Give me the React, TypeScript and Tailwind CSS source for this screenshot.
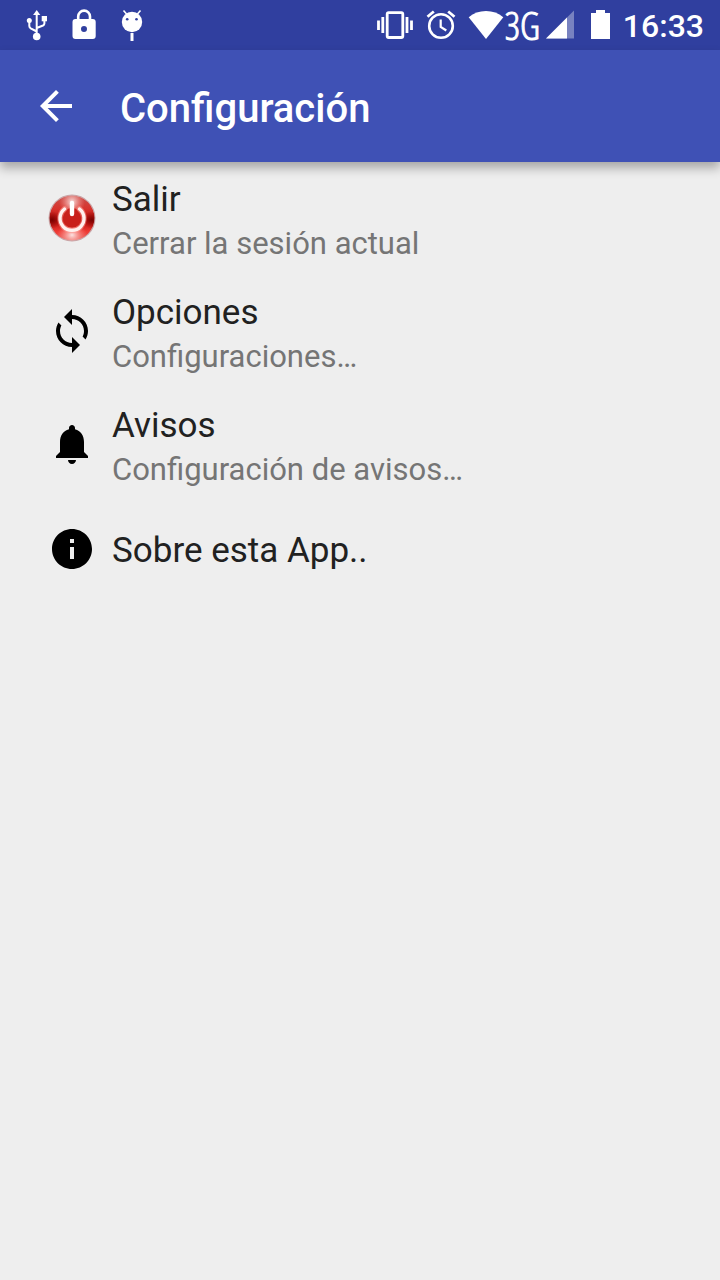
import type { ReactNode } from "react";

const SYNC =
  "M12 4V1L8 5l4 4V6c3.31 0 6 2.69 6 6 0 1.01-.25 1.97-.7 2.8l1.46 1.46C19.54 15.03 20 13.57 20 12c0-4.42-3.58-8-8-8zm0 14c-3.31 0-6-2.69-6-6 0-1.01.25-1.97.7-2.8L5.24 7.74C4.46 8.97 4 10.43 4 12c0 4.42 3.58 8 8 8v3l4-4-4-4v3z";
const BELL =
  "M12 22c1.1 0 2-.9 2-2h-4c0 1.1.89 2 2 2zm6-6v-5c0-3.07-1.64-5.64-4.5-6.32V4c0-.83-.67-1.5-1.5-1.5s-1.5.67-1.5 1.5v.68C7.63 5.36 6 7.92 6 11v5l-2 2v1h16v-1l-2-2z";
const INFO =
  "M12 2C6.48 2 2 6.48 2 12s4.48 10 10 10 10-4.48 10-10S17.52 2 12 2zm1 15h-2v-6h2v6zm0-8h-2V7h2v2z";

function Glyph({ d }: { d: string }) {
  return (
    <svg viewBox="0 0 24 24" className="size-12 shrink-0 fill-black" aria-hidden="true">
      <path d={d} />
    </svg>
  );
}

function PowerIcon() {
  return (
    <svg viewBox="0 0 48 48" className="size-12 shrink-0" aria-hidden="true">
      <defs>
        <linearGradient id="ball" x1="0" y1="0" x2="0" y2="1">
          <stop offset="0" stopColor="#c9504c" />
          <stop offset=".3" stopColor="#d8332d" />
          <stop offset=".55" stopColor="#b80e0a" />
          <stop offset=".8" stopColor="#ee3a34" />
          <stop offset="1" stopColor="#e8605a" />
        </linearGradient>
        <radialGradient id="shine">
          <stop offset="0" stopColor="#fff" stopOpacity=".85" />
          <stop offset="1" stopColor="#ff9a94" stopOpacity="0" />
        </radialGradient>
        <radialGradient id="shade">
          <stop offset="0" stopColor="#6a0000" stopOpacity=".85" />
          <stop offset="1" stopColor="#8a0000" stopOpacity="0" />
        </radialGradient>
        <clipPath id="disc">
          <circle cx="24" cy="24" r="22.5" />
        </clipPath>
      </defs>
      <circle cx="24" cy="24" r="23.5" fill="#c9a5a7" />
      <g clipPath="url(#disc)">
        <circle cx="24" cy="24" r="22.5" fill="url(#ball)" />
        <ellipse cx="4" cy="26" rx="9" ry="9" fill="url(#shade)" />
        <ellipse cx="44" cy="26" rx="9" ry="9" fill="url(#shade)" />
        <ellipse cx="24" cy="8" rx="13" ry="13" fill="url(#shine)" />
        <ellipse cx="24" cy="41" rx="15" ry="12" fill="url(#shine)" />
        <circle cx="24" cy="24" r="10" fill="#c9201b" />
      </g>
      <path d="M16.5 15a12 12 0 1 0 15 0" fill="none" stroke="#ff9d96" strokeOpacity=".5" strokeWidth="5.5" strokeLinecap="round" />
      <path d="M16.5 15a12 12 0 1 0 15 0" fill="none" stroke="#fff1ef" strokeWidth="3.4" strokeLinecap="round" />
      <path d="M24 9v11" stroke="#fff" strokeWidth="4.4" strokeLinecap="round" />
    </svg>
  );
}

type Item = { title: string; detail?: string; icon: ReactNode };

const items: Item[] = [
  { title: "Salir", detail: "Cerrar la sesión actual", icon: <PowerIcon /> },
  { title: "Opciones", detail: "Configuraciones…", icon: <Glyph d={SYNC} /> },
  { title: "Avisos", detail: "Configuración de avisos…", icon: <Glyph d={BELL} /> },
  { title: "Sobre esta App..", icon: <Glyph d={INFO} /> },
];

function StatusBar() {
  return (
    <div className="flex h-[50px] items-center justify-between bg-[#303f9f] pr-4 pl-6 text-white">
      <div className="flex items-center gap-5">
        <svg viewBox="24 0 26 50" className="h-[50px] w-[26px]" fill="none" stroke="#fff" strokeWidth="2" aria-hidden="true">
          <path d="M36.7 36V14M36.7 31.5l-6-3.2q-1.4-.8-1.4-2.3V21M36.7 28l6.3-2.5q1.4-.7 1.4-2V19" />
          <path d="M36.7 10l3.6 5h-7.2z" fill="#fff" stroke="none" />
          <circle cx="29.3" cy="20.6" r="2.5" fill="#fff" stroke="none" />
          <path d="M41.7 16h5.3v5.3h-5.3z" fill="#fff" stroke="none" />
          <circle cx="36.7" cy="36.5" r="3.8" fill="#fff" stroke="none" />
        </svg>
        <svg viewBox="70 0 28 50" className="h-[50px] w-7" aria-hidden="true">
          <path d="M78.2 20v-3.5a5.9 5.9 0 0 1 11.8 0V20" fill="none" stroke="#fff" strokeWidth="2.6" />
          <path
            fillRule="evenodd"
            fill="#fff"
            d="M75.5 19h17.2a3 3 0 0 1 3 3v14a3 3 0 0 1-3 3H75.5a3 3 0 0 1-3-3V22a3 3 0 0 1 3-3zM84 26a3 3 0 1 0 0 6 3 3 0 0 0 0-6z"
          />
        </svg>
        <svg viewBox="118 0 28 50" className="h-[50px] w-7" aria-hidden="true">
          <circle cx="132" cy="22" r="10.2" fill="#fff" />
          <circle cx="127.2" cy="19.3" r="1.3" fill="#303f9f" />
          <circle cx="136.5" cy="19.3" r="1.3" fill="#303f9f" />
          <path d="M127 14.5l-3.5-4M137 14.5l3.5-4" stroke="#fff" strokeWidth="1.6" />
          <path d="M132 33v8" stroke="#fff" strokeWidth="3" />
        </svg>
      </div>
      <div className="flex items-center">
        <svg viewBox="376 0 38 50" className="mr-3 h-[50px] w-[38px]" fill="none" stroke="#fff" aria-hidden="true">
          <rect x="387.2" y="12.7" width="15.6" height="24.8" rx="1.5" strokeWidth="2.8" />
          <path d="M382.8 17v16M407 17v16M378.5 20.5v9.5M411.5 20.5v9.5" strokeWidth="2.8" />
        </svg>
        <svg viewBox="426 0 30 50" className="mr-3 h-[50px] w-[30px]" fill="none" stroke="#fff" aria-hidden="true">
          <circle cx="441" cy="26" r="11.8" strokeWidth="2.6" />
          <path d="M440.7 19.5v7.3l5.6 3.7" strokeWidth="2.2" />
          <path d="M427.5 16.8l6.3-5.3M454.5 16.8l-6.3-5.3" strokeWidth="2.8" />
        </svg>
        <svg viewBox="468 0 36 50" className="h-[50px] w-9" aria-hidden="true">
          <path d="M486 39L468.7 17.2Q476 11 486 11t17.3 6.2z" fill="#fff" />
        </svg>
        <span className="w-[42px] pl-px font-['Open_Sans_Condensed_Light','Open_Sans_Condensed','Open_Sans',sans-serif] text-[38px] leading-[50px] font-light [-webkit-text-stroke:1px_white]">
          3G
        </span>
        <svg viewBox="546 0 28 50" className="mr-4 h-[50px] w-7" fill="#fff" aria-hidden="true">
          <path d="M546 38.5L574.5 10v28.5z" opacity=".35" />
          <path d="M546 38.5L567 17.5v21z" />
        </svg>
        <svg viewBox="590 0 20 50" className="mr-[13px] h-[50px] w-5" fill="#fff" aria-hidden="true">
          <path d="M591 13h5v-3h9v3h5v26h-19z" />
        </svg>
        <span className="pt-0.5 text-[32px] leading-9 font-medium">16:33</span>
      </div>
    </div>
  );
}

export default function App() {
  return (
    <div className="min-h-screen bg-[#eeeeee] font-[Roboto,sans-serif]">
      <StatusBar />
      <header className="flex h-28 items-center bg-[#3f51b5] pl-8 text-white shadow-[0_6px_10px_rgba(0,0,0,0.3)]">
        <button type="button" aria-label="Atrás" className="size-12">
          <svg viewBox="0 0 24 24" className="size-12 fill-white" aria-hidden="true">
            <path d="M20 11H7.83l5.59-5.59L12 4l-8 8 8 8 1.41-1.41L7.83 13H20v-2z" />
          </svg>
        </button>
        <h1 className="pt-1.5 pl-10 text-[40px] leading-[48px] font-medium">Configuración</h1>
      </header>
      <main>
        <ul>
          {items.map((item) => (
            <li key={item.title}>
              <button
                type="button"
                className={
                  item.detail
                    ? "flex h-[113px] w-full items-center gap-4 pr-8 pb-px pl-12 text-left"
                    : "flex h-24 w-full items-center gap-4 pr-8 pl-12 text-left"
                }
              >
                {item.icon}
                <span className={item.detail ? "flex flex-col pt-2" : "flex flex-col pt-1"}>
                  <span className="text-[35px] leading-[44px] text-[#212121]">{item.title}</span>
                  {item.detail && <span className="text-[31px] leading-[44px] text-[#757575]">{item.detail}</span>}
                </span>
              </button>
            </li>
          ))}
        </ul>
      </main>
    </div>
  );
}
